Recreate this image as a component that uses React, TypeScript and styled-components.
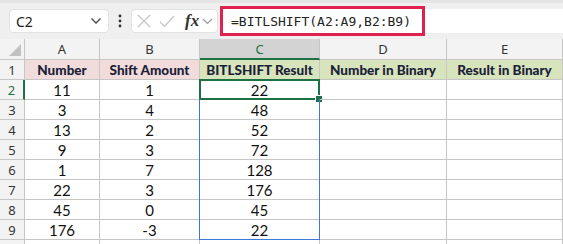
import React from 'react';
import styled, { createGlobalStyle, css } from 'styled-components';

const GlobalStyle = createGlobalStyle`
  html, body {
    margin: 0;
    padding: 0;
    background: #ffffff;
    overflow: hidden;
  }
`;

const columns = ['A', 'B', 'C', 'D', 'E'];
const headers = ['Number', 'Shift Amount', 'BITLSHIFT Result', 'Number in Binary', 'Result in Binary'];
const rows: Array<[number, number, number]> = [
  [11, 1, 22],
  [3, 4, 48],
  [13, 2, 52],
  [9, 3, 72],
  [1, 7, 128],
  [22, 3, 176],
  [45, 0, 45],
  [176, -3, 22],
];

const green = '#1e7145';
const blue = '#3f77d6';
const gridLine = '#c6c6c6';

const Page = styled.div`
  width: 563px;
  height: 244px;
  overflow: hidden;
  background: #fff;
`;

const Toolbar = styled.div`
  display: flex;
  align-items: center;
  height: 36px;
  border-top: 3px solid #e4e4e4;
  background: #efefef;
  padding-left: 9px;
  box-sizing: content-box;
`;

const NameBox = styled.div`
  display: flex;
  align-items: center;
  justify-content: space-between;
  width: 100px;
  height: 24px;
  box-sizing: border-box;
  padding: 0 6px 0 6px;
  background: #fff;
  border: 1px solid #e2e2e2;
  border-radius: 4px;
  font-family: 'Noto Sans', sans-serif;
  font-size: 14px;
  color: #222;
`;

const Dots = styled.div`
  width: 22px;
  display: flex;
  justify-content: center;
`;

const FxBox = styled.div`
  display: flex;
  align-items: center;
  gap: 8px;
  width: 87px;
  height: 24px;
  box-sizing: border-box;
  padding-left: 5px;
  background: #fff;
  border: 1px solid #e2e2e2;
  border-radius: 4px;
`;

const Fx = styled.span`
  font-family: 'Liberation Serif', serif;
  font-style: italic;
  font-size: 17px;
  font-weight: bold;
  color: #333;
  margin-left: 2px;
  margin-right: -5px;
`;

const FormulaBar = styled.div`
  flex: 1;
  display: flex;
  align-items: center;
  height: 24px;
  margin-left: 2px;
  background: #fff;
`;

const Highlight = styled.div`
  display: flex;
  align-items: center;
  width: 205px;
  height: 30px;
  box-sizing: border-box;
  border: 3px solid #e0214f;
  padding-left: 8px;
  font-family: 'DejaVu Sans Mono', monospace;
  font-size: 13px;
  color: #222;
`;

const Grid = styled.div`
  display: grid;
  grid-template-columns: 25px 75px 100px 120px 127px 1fr;
  grid-auto-rows: 20px;
  grid-template-rows: 21px;
  font-family: 'Lato', sans-serif;
`;

const Corner = styled.div`
  position: relative;
  background: #f3f3f3;
  border-right: 1px solid ${gridLine};
  border-bottom: 1px solid ${gridLine};
  &::after {
    content: '';
    position: absolute;
    right: 3px;
    bottom: 3px;
    border-style: solid;
    border-width: 0 0 12px 12px;
    border-color: transparent transparent #c2c2c2 transparent;
  }
`;

const ColHeader = styled.div<{ $active?: boolean }>`
  display: flex;
  align-items: center;
  justify-content: center;
  box-sizing: border-box;
  background: #f3f3f3;
  border-right: 1px solid ${gridLine};
  border-bottom: 1px solid ${gridLine};
  font-family: 'Noto Sans', sans-serif;
  font-size: 13px;
  color: #333;
  ${({ $active }) =>
    $active &&
    css`
      background: #d3d3d3;
      color: ${green};
      border-bottom: 2px solid ${green};
    `}
`;

const RowHeader = styled.div<{ $active?: boolean }>`
  display: flex;
  align-items: center;
  justify-content: center;
  box-sizing: border-box;
  background: #f3f3f3;
  border-right: 1px solid ${gridLine};
  border-bottom: 1px solid ${gridLine};
  font-family: 'Noto Sans', sans-serif;
  font-size: 13px;
  color: #333;
  ${({ $active }) =>
    $active &&
    css`
      color: ${green};
      border-right: 2px solid ${green};
    `}
`;

const Cell = styled.div<{ $fill?: 'pink' | 'green'; $bold?: boolean }>`
  position: relative;
  display: flex;
  align-items: center;
  justify-content: center;
  padding-top: 1px;
  border-right: 1px solid ${gridLine};
  border-bottom: 1px solid ${gridLine};
  font-size: 15px;
  color: #111;
  white-space: nowrap;
  ${({ $bold }) =>
    $bold &&
    css`
      font-weight: 900;
      font-size: 13.5px;
      color: #1a2138;
    `}
  ${({ $fill }) =>
    $fill === 'pink' &&
    css`
      background: #f2dcdb;
    `}
  ${({ $fill }) =>
    $fill === 'green' &&
    css`
      background: #d8e4bc;
    `}
`;

const Selected = styled.div`
  position: absolute;
  left: -1px;
  top: -1px;
  right: -1px;
  bottom: -1px;
  border: 2px solid ${green};
  pointer-events: none;
  &::after {
    content: '';
    position: absolute;
    right: -5px;
    bottom: -5px;
    width: 6px;
    height: 6px;
    background: ${green};
    border: 1px solid #fff;
  }
`;

const Range = styled.div<{ $last?: boolean }>`
  position: absolute;
  left: -1px;
  top: -1px;
  right: -1px;
  bottom: -1px;
  border-left: 1px solid ${blue};
  border-right: 1px solid ${blue};
  border-bottom: ${({ $last }) => ($last ? `1px solid ${blue}` : 'none')};
  pointer-events: none;
`;

const Chevron = () => (
  <svg width="12" height="8" viewBox="0 0 12 8">
    <path d="M1.5 1.5 L6 6 L10.5 1.5" fill="none" stroke="#444" strokeWidth="1.3" />
  </svg>
);

const VerticalDots = () => (
  <svg width="4" height="14" viewBox="0 0 4 14">
    <circle cx="2" cy="2" r="1.4" fill="#333" />
    <circle cx="2" cy="7" r="1.4" fill="#333" />
    <circle cx="2" cy="12" r="1.4" fill="#333" />
  </svg>
);

const CrossIcon = () => (
  <svg width="14" height="14" viewBox="0 0 14 14">
    <path d="M1 1 L13 13 M13 1 L1 13" stroke="#c4c4c4" strokeWidth="1.2" />
  </svg>
);

const CheckIcon = () => (
  <svg width="16" height="13" viewBox="0 0 16 13">
    <path d="M1 7 L5.5 11.5 L15 1" fill="none" stroke="#c4c4c4" strokeWidth="1.2" />
  </svg>
);

const SmallChevron = () => (
  <svg width="11" height="7" viewBox="0 0 11 7">
    <path d="M1 1 L5.5 5.5 L10 1" fill="none" stroke="#999" strokeWidth="1.2" />
  </svg>
);

export default function App() {
  return (
    <Page>
      <GlobalStyle />
      <Toolbar>
        <NameBox>
          C2
          <Chevron />
        </NameBox>
        <Dots>
          <VerticalDots />
        </Dots>
        <FxBox>
          <CrossIcon />
          <CheckIcon />
          <Fx>fx</Fx>
          <SmallChevron />
        </FxBox>
        <FormulaBar>
          <Highlight>=BITLSHIFT(A2:A9,B2:B9)</Highlight>
        </FormulaBar>
      </Toolbar>
      <Grid>
        <Corner />
        {columns.map((c) => (
          <ColHeader key={c} $active={c === 'C'}>
            {c}
          </ColHeader>
        ))}

        <RowHeader>1</RowHeader>
        {headers.map((h, i) => (
          <Cell key={h} $bold $fill={i < 2 ? 'pink' : 'green'}>
            {h}
          </Cell>
        ))}

        {rows.map((r, i) => {
          const rowNum = i + 2;
          return (
            <React.Fragment key={rowNum}>
              <RowHeader $active={rowNum === 2}>{rowNum}</RowHeader>
              <Cell>{r[0]}</Cell>
              <Cell>{r[1]}</Cell>
              <Cell>
                {r[2]}
                {rowNum === 2 ? <Selected /> : <Range $last={rowNum === 9} />}
              </Cell>
              <Cell />
              <Cell />
            </React.Fragment>
          );
        })}
        <RowHeader />
        <Cell />
        <Cell />
        <Cell />
        <Cell />
        <Cell />
      </Grid>
    </Page>
  );
}
